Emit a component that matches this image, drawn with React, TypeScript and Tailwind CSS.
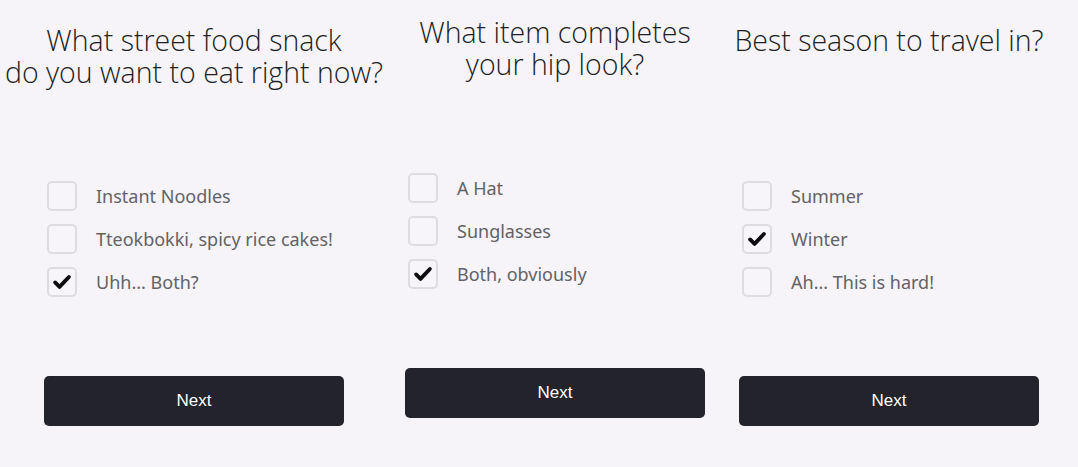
import React from "react";

type Question = {
  title: string[];
  options: string[];
  checked: number;
  offset: string;
  width: string;
};

const questions: Question[] = [
  {
    title: ["What street food snack", "do you want to eat right now?"],
    options: ["Instant Noodles", "Tteokbokki, spicy rice cakes!", "Uhh... Both?"],
    checked: 2,
    offset: "pt-6",
    width: "w-[388px]",
  },
  {
    title: ["What item completes", "your hip look?"],
    options: ["A Hat", "Sunglasses", "Both, obviously"],
    checked: 2,
    offset: "pt-4 ml-[17px]",
    width: "w-[300px]",
  },
  {
    title: ["Best season to travel in?"],
    options: ["Summer", "Winter", "Ah... This is hard!"],
    checked: 1,
    offset: "pt-6 ml-[29px]",
    width: "w-[310px]",
  },
];

const Check = () => (
  <svg viewBox="0 0 24 24" className="h-[22px] w-[22px]" fill="none">
    <path
      d="M4.5 12.5l4.8 4.8L19.5 6.5"
      stroke="#0d0d0f"
      strokeWidth="4.2"
      strokeLinecap="round"
      strokeLinejoin="round"
    />
  </svg>
);

const QuestionCard = ({ q }: { q: Question }) => (
  <div className={`flex shrink-0 flex-col ${q.width} ${q.offset}`}>
    <div
      className="h-[64px] whitespace-nowrap text-center text-[28.5px] font-light leading-[32px] text-[#1d1f24]"
      style={{ fontFamily: "'Open Sans', sans-serif" }}
    >
      {q.title.map((line) => (
        <div key={line}>{line}</div>
      ))}
    </div>

    <div className="mx-auto mt-[93px] flex w-[300px] flex-col gap-[13px] pl-[3px]">
      {q.options.map((opt, i) => (
        <label key={opt} className="flex h-[30px] items-center gap-[19px]">
          <span className="flex h-[30px] w-[30px] items-center justify-center rounded-[5px] border-2 border-[#dddce1] bg-[#f7f5f9]">
            {i === q.checked && <Check />}
          </span>
          <span
            className="text-[18px] text-[#626267]"
            style={{ fontFamily: "'Noto Sans', sans-serif" }}
          >
            {opt}
          </span>
        </label>
      ))}
    </div>

    <button
      className="mx-auto mt-[79px] h-[50px] w-[300px] rounded-[5px] bg-[#22232b] text-[17px] font-medium text-white"
      style={{ fontFamily: "'Liberation Sans', Arial, sans-serif" }}
    >
      Next
    </button>
  </div>
);

export default function App() {
  return (
    <div className="flex h-[467px] w-[1078px] items-start overflow-hidden bg-[#f6f4f8]">
      {questions.map((q) => (
        <QuestionCard key={q.title[0]} q={q} />
      ))}
    </div>
  );
}
